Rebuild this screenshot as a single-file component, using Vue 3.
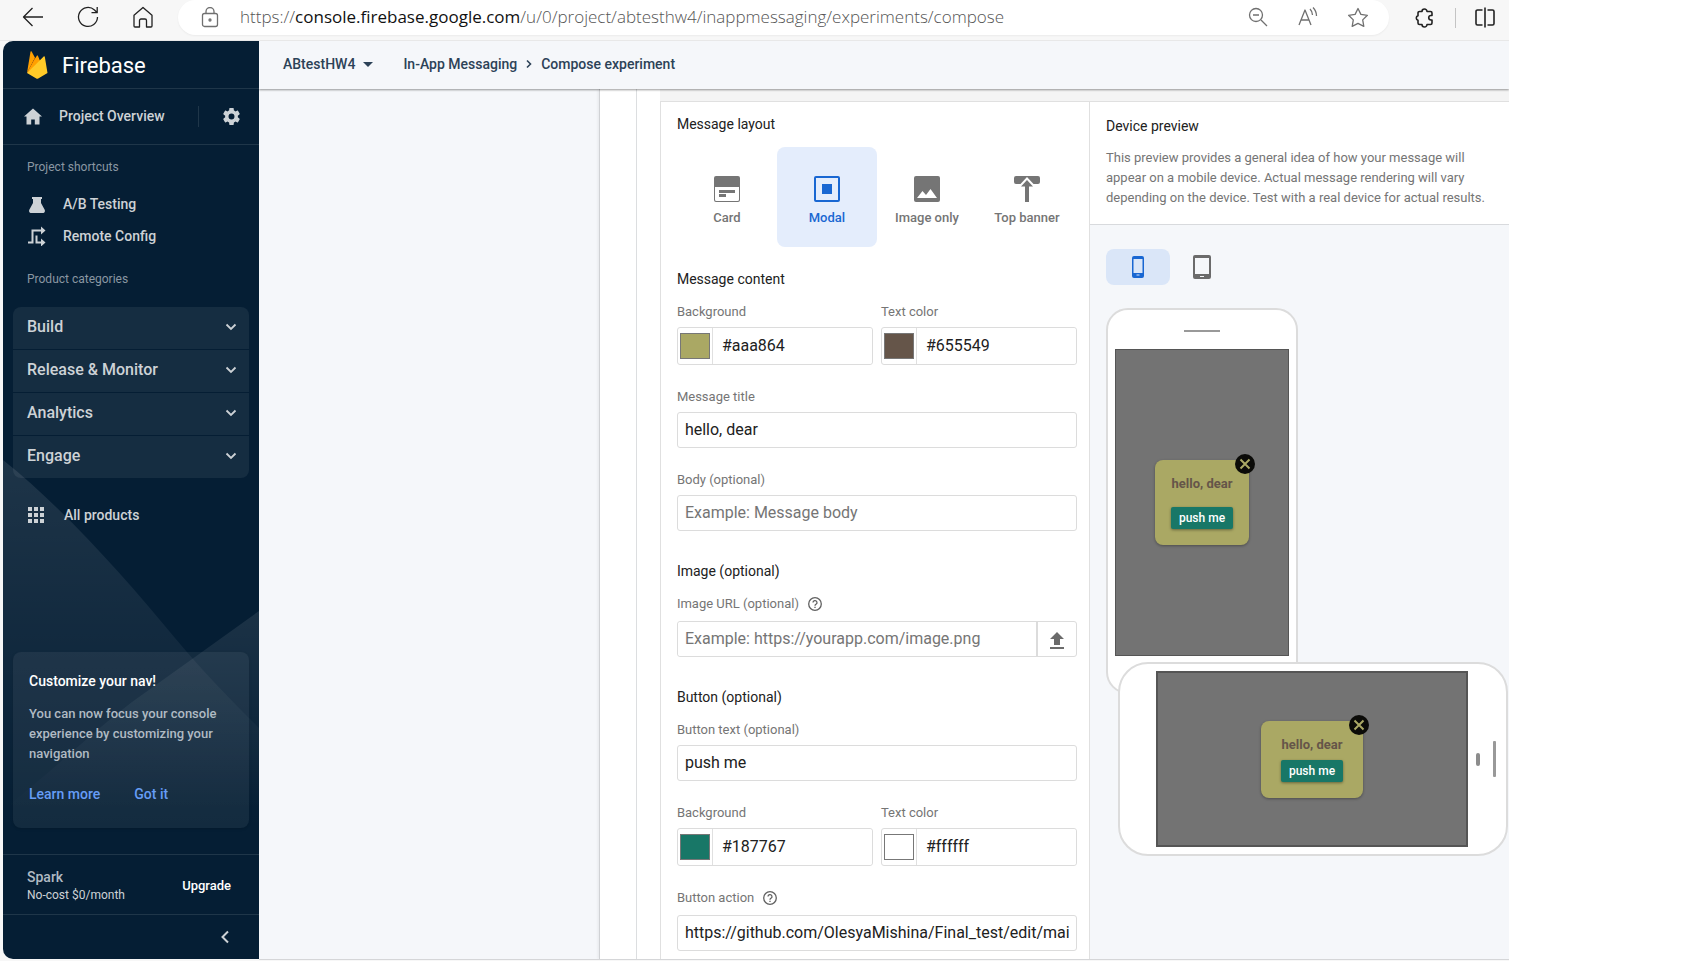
<script setup>
import { reactive, ref } from 'vue'

const layouts = [
  { id: 'card', label: 'Card' },
  { id: 'modal', label: 'Modal' },
  { id: 'image', label: 'Image only' },
  { id: 'banner', label: 'Top banner' },
]
const layout = ref('modal')
const device = ref('phone')
const categories = ['Build', 'Release & Monitor', 'Analytics', 'Engage']

const message = reactive({
  background: '#aaa864',
  color: '#655549',
  title: 'hello, dear',
  body: '',
  image: '',
  buttonText: 'push me',
  buttonBackground: '#187767',
  buttonColor: '#ffffff',
  action: 'https://github.com/OlesyaMishina/Final_test/edit/main/README.md',
})
</script>

<template>
  <div class="window">
    <header class="browser">
      <nav class="browser-nav" aria-label="Browser">
        <button type="button" aria-label="Back">
          <svg width="22" height="22" viewBox="0 0 22 22"><path d="M21 11H2M10.500 2 1.500 11l9 9" /></svg>
        </button>
        <button type="button" aria-label="Refresh">
          <svg width="22" height="22" viewBox="0 0 22 22"><path d="M20.500 11a9.500 9.500 0 1 1-3-7l2.500 2.500M20.200 1v5.700h-5.700" /></svg>
        </button>
        <button type="button" aria-label="Home">
          <svg width="22" height="22" viewBox="0 0 22 22"><path d="M2 9.200 11 1.500l9 7.700V20a1 1 0 0 1-1 1h-4.500v-6.500a1.500 1.500 0 0 0-1.500-1.500h-4a1.500 1.500 0 0 0-1.500 1.500V21H3a1 1 0 0 1-1-1z" /></svg>
        </button>
      </nav>
      <div class="address">
        <svg width="18" height="22" viewBox="0 0 18 22"><rect x="1.500" y="6.500" width="15" height="13" rx="2" /><path d="M5 6.500v-2a4 4 0 0 1 8 0v2" /><circle cx="9" cy="13" r="1" /></svg>
        <span class="url">https://<b>console.firebase.google.com</b>/u/0/project/abtesthw4/inappmessaging/experiments/compose</span>
        <div class="address-tools">
          <button type="button" aria-label="Zoom out">
            <svg width="22" height="22" viewBox="0 0 22 22"><circle cx="9" cy="8" r="6.500" /><path d="m14 13 6 6M6 8h6" /></svg>
          </button>
          <button type="button" aria-label="Read aloud">
            <svg width="22" height="22" viewBox="0 0 22 22"><path d="m2 18 6-15 6 15M4 13h8M13 2c1.500 1.500 2.500 3.500 2.500 6M16 .5c2 2 3.500 5 3.500 8.500" /></svg>
          </button>
          <button type="button" aria-label="Add to favourites">
            <svg width="22" height="22" viewBox="0 0 22 22"><path d="m11 1.500 2.900 5.900 6.500.9-4.700 4.600 1.100 6.500-5.800-3-5.800 3 1.100-6.500L1.600 8.300l6.500-.9z" /></svg>
          </button>
        </div>
      </div>
      <div class="browser-tools">
        <button type="button" aria-label="Extensions">
          <svg class="bold" width="22" height="22" viewBox="0 0 22 22"><path d="M5.500 4.500H8a2.500 2.500 0 0 1 5 0h3.500A1.500 1.500 0 0 1 18 6v2.500h-1a2.200 2.200 0 0 0 0 4.500h1v3a1.500 1.500 0 0 1-1.500 1.500H13a2.500 2.500 0 0 1-5 0H5.500A1.500 1.500 0 0 1 4 16v-2.700a2.400 2.400 0 0 1 0-4.600V6a1.500 1.500 0 0 1 1.500-1.500z" /></svg>
        </button>
        <i class="tool-divider"></i>
        <button type="button" aria-label="Split screen">
          <svg class="bold" width="22" height="22" viewBox="0 0 22 22"><path d="M8.500 3h-5A1.500 1.500 0 0 0 2 4.500v12A1.500 1.500 0 0 0 3.500 18h5M13.500 3h5A1.500 1.500 0 0 1 20 4.500v12a1.500 1.500 0 0 1-1.500 1.500h-5M11 .5v20" /></svg>
        </button>
      </div>
    </header>

    <div class="app">
      <aside class="sidebar">
        <svg class="decor" viewBox="0 0 256 400" preserveAspectRatio="none" aria-hidden="true">
          <defs>
            <linearGradient id="fade" x1="0" y1="0" x2="0" y2="1">
              <stop offset="0" stop-color="#fff" stop-opacity=".1" />
              <stop offset="1" stop-color="#fff" stop-opacity="0" />
            </linearGradient>
            <linearGradient id="fade2" x1="0" y1="0" x2="0" y2="1">
              <stop offset="0" stop-color="#fff" stop-opacity=".09" />
              <stop offset="1" stop-color="#fff" stop-opacity="0" />
            </linearGradient>
          </defs>
          <path fill="url(#fade)" d="M0 0C60 48 120 115 172 178c30 36 54 60 84 90v102H0z" />
          <path fill="url(#fade2)" d="M256 151 192 197 129 242C90 272 50 310 0 350h256z" />
        </svg>
        <a class="brand" href="#">
          <svg width="22" height="28" viewBox="0 0 22 28">
            <path fill="#ffa000" d="M1 22 4.500.8c.1-.6.800-.7 1.100-.2L9 6.800z" />
            <path fill="#f57c00" d="m12.500 12.500-3.200-6L1 22z" />
            <path fill="#ffa000" d="m1 22 9.800-17.200c.3-.5.900-.5 1.100 0l2.600 6.200z" />
            <path fill="#ffca28" d="M1 22 17.700 5.400c.4-.4 1-.2 1.100.3L21.500 22l-9.300 5.400c-.6.300-1.300.3-1.900 0z" />
          </svg>
          <span>Firebase</span>
        </a>
        <div class="overview">
          <a href="#">
            <svg width="20" height="20" viewBox="0 0 20 20"><path fill="currentColor" d="M10 2.500 1 10.500h2.500v8h4.700v-5h3.600v5h4.700v-8H19z" /></svg>
            Project Overview
          </a>
          <button type="button" aria-label="Project settings">
            <svg width="17" height="17" viewBox="2 2 20 20"><path fill="currentColor" d="M19.430 12.980c.04-.32.07-.64.07-.98s-.03-.66-.07-.98l2.110-1.650c.19-.15.24-.42.12-.64l-2-3.460c-.12-.22-.39-.3-.61-.22l-2.490 1c-.52-.4-1.080-.73-1.690-.98l-.38-2.650C14.460 2.180 14.250 2 14 2h-4c-.25 0-.46.18-.49.42l-.38 2.650c-.61.25-1.170.59-1.690.98l-2.490-1c-.23-.09-.49 0-.61.22l-2 3.460c-.13.22-.07.49.12.64l2.110 1.650c-.04.32-.07.65-.07.98s.03.66.07.98l-2.110 1.650c-.19.15-.24.42-.12.64l2 3.460c.12.22.39.3.61.22l2.490-1c.52.4 1.080.73 1.690.98l.38 2.650c.03.24.24.42.49.42h4c.25 0 .46-.18.49-.42l.38-2.650c.61-.25 1.170-.59 1.690-.98l2.490 1c.23.09.49 0 .61-.22l2-3.460c.12-.22.07-.49-.12-.64zM12 15.500a3.500 3.500 0 1 1 0-7 3.500 3.500 0 0 1 0 7z" /></svg>
          </button>
        </div>
        <h2 class="nav-label">Project shortcuts</h2>
        <nav class="shortcuts" aria-label="Project shortcuts">
          <a href="#">
            <svg width="20" height="20" viewBox="0 0 20 20"><path fill="currentColor" d="M5 3h10v2h-1v4l3.700 6.800c.6 1.100.1 3.200-1.200 3.200h-13c-1.300 0-1.800-2.100-1.200-3.200L6 9V5H5z" /></svg>
            A/B Testing
          </a>
          <a href="#">
            <svg width="20" height="20" viewBox="0 0 20 20"><path fill="none" stroke="currentColor" stroke-width="2" d="M1 16.500h4.500v-12H15M9.500 9.500v7H15" /><path fill="currentColor" d="m14 .5 4.500 4-4.500 4zM14 12.500l4.500 4-4.500 4z" /></svg>
            Remote Config
          </a>
        </nav>
        <h2 class="nav-label">Product categories</h2>
        <div class="categories">
          <button v-for="name in categories" :key="name" type="button">
            <span>{{ name }}</span>
            <svg width="12" height="8" viewBox="0 0 12 8"><path fill="none" stroke="currentColor" stroke-width="1.800" d="m1.500 1.500 4.500 4.500 4.500-4.500" /></svg>
          </button>
        </div>
        <a class="all-products" href="#">
          <svg width="18" height="18" viewBox="0 0 18 18"><path fill="currentColor" d="M0 1h4v4H0zm6 0h4v4H6zm6 0h4v4h-4zM0 7h4v4H0zm6 0h4v4H6zm6 0h4v4h-4zM0 13h4v4H0zm6 0h4v4H6zm6 0h4v4h-4z" /></svg>
          All products
        </a>
        <section class="promo">
          <h3>Customize your nav!</h3>
          <p>You can now focus your console experience by customizing your navigation</p>
          <div class="promo-actions">
            <a href="#">Learn more</a>
            <button type="button">Got it</button>
          </div>
        </section>
        <div class="plan">
          <div>
            <strong>Spark</strong>
            <small>No-cost $0/month</small>
          </div>
          <button type="button">Upgrade</button>
        </div>
        <div class="collapse">
          <button type="button" aria-label="Collapse navigation">
            <svg width="8" height="14" viewBox="0 0 8 14"><path fill="none" stroke="currentColor" stroke-width="2" d="M7 1.500 1.500 7 7 12.500" /></svg>
          </button>
        </div>
      </aside>

      <main class="main">
        <div class="topbar">
          <button type="button">ABtestHW4
            <svg width="10" height="5" viewBox="0 0 10 5"><path fill="currentColor" d="M0 0h10L5 5z" /></svg>
          </button>
          <a href="#">In-App Messaging</a>
          <svg class="crumb" width="6" height="10" viewBox="0 0 6 10"><path fill="none" stroke="currentColor" stroke-width="1.600" d="M1 1.500 4.500 5 1 8.500" /></svg>
          <a href="#">Compose experiment</a>
        </div>

        <div class="content">
          <div class="wizard">
            <div class="panel">
              <form class="form" @submit.prevent>
                <h2>Message layout</h2>
                <div class="tiles">
                  <button
                    v-for="item in layouts"
                    :key="item.id"
                    type="button"
                    :class="{ active: layout === item.id }"
                    :aria-pressed="layout === item.id"
                    @click="layout = item.id"
                  >
                    <svg width="26" height="26" viewBox="0 0 26 26">
                      <path v-if="item.id === 'card'" fill="currentColor" fill-rule="evenodd" d="M2 0h22a2 2 0 0 1 2 2v22a2 2 0 0 1-2 2H2a2 2 0 0 1-2-2V2a2 2 0 0 1 2-2zM1 11v12.500a1.500 1.500 0 0 0 1.500 1.500h21a1.500 1.500 0 0 0 1.500-1.500V11zm4 3h16v3H5zm0 4h7v3H5z" />
                      <path v-else-if="item.id === 'modal'" fill="currentColor" fill-rule="evenodd" d="M2 0h22a2 2 0 0 1 2 2v22a2 2 0 0 1-2 2H2a2 2 0 0 1-2-2V2a2 2 0 0 1 2-2zm0 2v22h22V2zm6 6h10v10H8z" />
                      <path v-else-if="item.id === 'image'" fill="currentColor" fill-rule="evenodd" d="M2 0h22a2 2 0 0 1 2 2v22a2 2 0 0 1-2 2H2a2 2 0 0 1-2-2V2a2 2 0 0 1 2-2zm1 22h20l-6.500-9-4.500 6-3.500-4z" />
                      <path v-else fill="currentColor" d="M2 0h22a2 2 0 0 1 2 2v4a2 2 0 0 1-2 2h-4.500L13 1 6.500 8H2a2 2 0 0 1-2-2V2a2 2 0 0 1 2-2zm11 4 6 6.500h-4V26h-4V10.500H7z" />
                    </svg>
                    {{ item.label }}
                  </button>
                </div>

                <h2 class="first">Message content</h2>
                <div class="pair">
                  <div class="field">
                    <label for="bg">Background</label>
                    <div class="color">
                      <input v-model="message.background" type="color" aria-label="Background swatch">
                      <input id="bg" v-model="message.background" type="text">
                    </div>
                  </div>
                  <div class="field">
                    <label for="fg">Text color</label>
                    <div class="color">
                      <input v-model="message.color" type="color" aria-label="Text color swatch">
                      <input id="fg" v-model="message.color" type="text">
                    </div>
                  </div>
                </div>
                <div class="field">
                  <label for="title">Message title</label>
                  <input id="title" v-model="message.title" type="text">
                </div>
                <div class="field">
                  <label for="body">Body (optional)</label>
                  <input id="body" v-model="message.body" type="text" placeholder="Example: Message body">
                </div>

                <h2>Image (optional)</h2>
                <div class="field helped">
                  <label for="image">Image URL (optional)
                    <svg width="14" height="14" viewBox="0 0 14 14"><circle cx="7" cy="7" r="6.300" /><path d="M5 5.600a2 2 0 1 1 3 1.700c-.7.400-1 .7-1 1.400M7 9.800v1.200" /></svg>
                  </label>
                  <div class="upload">
                    <input id="image" v-model="message.image" type="text" placeholder="Example: https://yourapp.com/image.png">
                    <button type="button" aria-label="Upload image">
                      <svg width="14" height="17" viewBox="0 0 14 17"><path fill="currentColor" d="M4 13V7H0l7-7 7 7h-4v6zM0 15h14v2H0z" /></svg>
                    </button>
                  </div>
                </div>

                <h2>Button (optional)</h2>
                <div class="field">
                  <label for="button-text">Button text (optional)</label>
                  <input id="button-text" v-model="message.buttonText" type="text">
                </div>
                <div class="pair">
                  <div class="field">
                    <label for="button-bg">Background</label>
                    <div class="color">
                      <input v-model="message.buttonBackground" type="color" aria-label="Button background swatch">
                      <input id="button-bg" v-model="message.buttonBackground" type="text">
                    </div>
                  </div>
                  <div class="field">
                    <label for="button-fg">Text color</label>
                    <div class="color">
                      <input v-model="message.buttonColor" type="color" aria-label="Button text color swatch">
                      <input id="button-fg" v-model="message.buttonColor" type="text">
                    </div>
                  </div>
                </div>
                <div class="field helped">
                  <label for="action">Button action
                    <svg width="14" height="14" viewBox="0 0 14 14"><circle cx="7" cy="7" r="6.300" /><path d="M5 5.600a2 2 0 1 1 3 1.700c-.7.400-1 .7-1 1.400M7 9.800v1.200" /></svg>
                  </label>
                  <input id="action" v-model="message.action" type="text">
                </div>
              </form>

              <section class="preview">
                <div class="preview-head">
                  <h2>Device preview</h2>
                  <p>This preview provides a general idea of how your message will appear on a mobile device. Actual message rendering will vary depending on the device. Test with a real device for actual results.</p>
                </div>
                <div class="stage">
                  <div class="toggle">
                    <button type="button" aria-label="Phone" :class="{ active: device === 'phone' }" @click="device = 'phone'">
                      <svg width="18" height="24" viewBox="0 0 18 24"><path fill="currentColor" fill-rule="evenodd" d="M5 1h8a2 2 0 0 1 2 2v18a2 2 0 0 1-2 2H5a2 2 0 0 1-2-2V3a2 2 0 0 1 2-2zm-.500 3v14h9V4zm3 15.500v1h3v-1z" /></svg>
                    </button>
                    <button type="button" aria-label="Tablet" :class="{ active: device === 'tablet' }" @click="device = 'tablet'">
                      <svg width="18" height="24" viewBox="0 0 18 24"><path fill="currentColor" fill-rule="evenodd" d="M2 0h14a2 2 0 0 1 2 2v20a2 2 0 0 1-2 2H2a2 2 0 0 1-2-2V2a2 2 0 0 1 2-2zm0 3v16h14V3zm5 18v1h4v-1z" /></svg>
                    </button>
                  </div>
                  <div class="phone">
                    <i class="speaker"></i>
                    <div class="screen">
                      <div class="modal" :style="{ background: message.background, color: message.color }">
                        <button class="close" type="button" aria-label="Close portrait message"><svg width="20" height="20" viewBox="0 0 20 20"><circle cx="10" cy="10" r="10" fill="#0b0b08" /><path :stroke="message.background" stroke-width="2" d="m5.500 5.500 9 9m0-9-9 9" /></svg></button>
                        <strong>{{ message.title }}</strong>
                        <button class="cta" type="button" :style="{ background: message.buttonBackground, color: message.buttonColor }">{{ message.buttonText }}</button>
                      </div>
                    </div>
                  </div>
                  <div class="phone landscape">
                    <div class="screen">
                      <div class="modal" :style="{ background: message.background, color: message.color }">
                        <button class="close" type="button" aria-label="Close landscape message"><svg width="20" height="20" viewBox="0 0 20 20"><circle cx="10" cy="10" r="10" fill="#0b0b08" /><path :stroke="message.background" stroke-width="2" d="m5.500 5.500 9 9m0-9-9 9" /></svg></button>
                        <strong>{{ message.title }}</strong>
                        <button class="cta" type="button" :style="{ background: message.buttonBackground, color: message.buttonColor }">{{ message.buttonText }}</button>
                      </div>
                    </div>
                    <i class="sensor"></i>
                    <i class="speaker"></i>
                  </div>
                </div>
              </section>
            </div>
          </div>
        </div>
      </main>
    </div>
  </div>
</template>

<style>
body {
  background: #fff;
}
</style>

<style scoped>
* {
  box-sizing: border-box;
}
button,
input {
  font: inherit;
  color: inherit;
}
button {
  padding: 0;
  border: 0;
  background: none;
}
a {
  color: inherit;
  text-decoration: none;
}
h2,
h3,
p {
  margin: 0;
}
svg {
  display: block;
  flex: none;
}
.window {
  display: flex;
  flex-direction: column;
  min-height: 100vh;
  margin-right: 180px;
  background: #f7f7f7;
  font: 14px/20px Roboto, sans-serif;
  color: #212121;
}

/* Browser bar */
.browser {
  display: flex;
  height: 41px;
  padding-bottom: 5px;
  border-bottom: 1px solid #e8e8e8;
}
.browser svg {
  fill: none;
  stroke: currentColor;
  stroke-width: 1.3;
  stroke-linejoin: round;
}
.browser svg.bold {
  stroke-width: 1.6;
}
.browser-nav {
  display: flex;
  gap: 33px;
  width: 178px;
  padding: 0 0 2px 22px;
  color: #222;
  align-items: center;
}
.address {
  display: flex;
  flex: 1;
  align-items: center;
  min-width: 0;
  padding: 0 20px 0 23px;
  border-radius: 18px;
  background: #fff;
  box-shadow: 0 1px 2px #0000000d;
  color: #707070;
}
.url {
  flex: 1;
  min-width: 0;
  padding: 0 0 2px 21px;
  overflow: hidden;
  white-space: nowrap;
  font: 300 17px/30px "Open Sans", "Noto Sans", sans-serif;
  color: #555;
}
.url b {
  font-weight: 400;
  color: #111;
}
.address-tools {
  display: flex;
  gap: 28px;
}
.browser-tools {
  display: flex;
  align-items: center;
  justify-content: space-between;
  width: 120px;
  padding: 0 13px 0 25px;
  color: #222;
}
.tool-divider {
  width: 1px;
  height: 20px;
  background: #c4c4c4;
}

/* Sidebar */
.app {
  display: flex;
  flex: 1;
  padding-left: 3px;
}
.sidebar {
  position: relative;
  display: flex;
  flex-direction: column;
  width: 256px;
  flex: none;
  margin-bottom: 2px;
  border-radius: 10px 0 0 10px;
  background: #051e34;
  color: #cdd2d6;
  font-weight: 500;
  overflow: hidden;
}
.decor {
  position: absolute;
  left: 0;
  bottom: 99px;
  width: 100%;
  height: 400px;
}
.sidebar > :not(.decor) {
  position: relative;
}
.brand {
  display: flex;
  align-items: center;
  gap: 14px;
  height: 48px;
  padding-left: 23px;
  border-bottom: 1px solid #1f3649;
  color: #fff;
  font-size: 22px;
  font-weight: 400;
}
.brand span {
  padding-top: 2px;
}
.overview {
  display: flex;
  align-items: center;
  justify-content: space-between;
  height: 56px;
  padding: 0 19px 0 20px;
  border-bottom: 1px solid #1f3649;
}
.overview a {
  display: flex;
  gap: 16px;
  flex: 1;
  padding-bottom: 2px;
}
.overview button {
  padding: 2px 0 2px 24px;
  border-left: 1px solid #1f3649;
}
.nav-label {
  padding: 12px 24px 11px;
  font-size: 12px;
  font-weight: 400;
  line-height: 20px;
  color: #8a97a2;
}
.shortcuts {
  margin-bottom: 5px;
}
.shortcuts a {
  display: flex;
  align-items: center;
  gap: 16px;
  height: 32px;
  padding-left: 24px;
}
.categories {
  display: grid;
  gap: 1px;
  margin: 7px 10px 0;
  border-radius: 8px;
  overflow: hidden;
}
.categories button {
  display: flex;
  align-items: center;
  justify-content: space-between;
  height: 42px;
  padding: 0 12px 2px 14px;
  background: #ffffff11;
  font-size: 16px;
}
.all-products {
  display: flex;
  align-items: center;
  gap: 18px;
  height: 40px;
  margin-top: 17px;
  padding-left: 25px;
}
.promo {
  margin: auto 10px 26px;
  padding: 19px 16px 24px;
  border-radius: 8px;
  background: #ffffff0f;
  box-shadow: 0 1px 3px #0002;
}
.promo h3 {
  color: #fff;
  font-size: 14px;
  font-weight: 500;
}
.promo p {
  margin: 13px 0 20px;
  font-size: 13px;
  color: #b0bac3;
}
.promo-actions {
  display: flex;
  gap: 34px;
  line-height: 20px;
  color: #669df6;
}
.plan {
  display: flex;
  align-items: center;
  justify-content: space-between;
  height: 61px;
  padding: 2px 28px 0 24px;
  border-top: 1px solid #1f3649;
  border-bottom: 1px solid #1f3649;
}
.plan strong,
.plan small {
  display: block;
  line-height: 18px;
}
.plan strong {
  font-weight: 500;
  color: #b0bac3;
}
.plan small {
  font-size: 12px;
  font-weight: 400;
}
.plan button {
  color: #fff;
  font-size: 13px;
}
.collapse {
  display: flex;
  justify-content: flex-end;
  height: 44px;
  padding-right: 30px;
}

/* Main area */
.main {
  display: flex;
  flex-direction: column;
  flex: 1;
  min-width: 0;
  margin-bottom: 1px;
  border-bottom: 1px solid #d5d6d8;
  background: #f5f7fa;
  overflow: hidden;
}
.topbar {
  position: relative;
  z-index: 1;
  display: flex;
  align-items: center;
  height: 48px;
  padding: 0 24px 2px;
  background: #f5f7fa;
  box-shadow: 0 1px 2px #0006;
  color: #2c4257;
  font-weight: 500;
}
.topbar button {
  display: flex;
  align-items: center;
  gap: 8px;
  margin-right: 30px;
}
.crumb {
  margin: 0 9px;
}
.content {
  display: grid;
  grid-template-columns: 3fr 8fr;
  flex: 1;
}
.wizard {
  display: grid;
  grid-column: 2;
  grid-template-columns: minmax(0, 1fr);
  margin-left: -1px;
  padding-left: 36px;
  border-left: 1px solid #d0d2d5;
  box-shadow: -1px 0 3px #0001;
  background: #fff;
}
.panel {
  display: grid;
  grid-template-columns: minmax(0, 1fr) 420px;
  padding-left: 23px;
  border-left: 1px solid #dcdee0;
}
.form {
  padding: 12px 12px 7px 16px;
}
.form,
.preview {
  border-left: 1px solid #e0e0e0;
  border-top: 1px solid #e0e0e0;
  margin-top: 12px;
  position: relative;
}
.form::before,
.preview::before {
  content: "";
  position: absolute;
  left: -1px;
  right: 0;
  top: -13px;
  height: 12px;
  background: #f4f4f4;
}
.form h2,
.preview h2 {
  font-size: 14px;
  font-weight: 400;
  line-height: 20px;
}
.form h2 {
  margin: 30px 0 13px;
}
.form h2:first-child {
  margin-top: 0;
}
.form h2.first {
  margin-top: 22px;
}
.tiles {
  display: grid;
  grid-template-columns: repeat(4, 1fr);
}
.tiles button {
  display: flex;
  flex-direction: column;
  align-items: center;
  gap: 6px;
  height: 100px;
  padding-top: 29px;
  border-radius: 8px;
  color: #757575;
  font-size: 13px;
  font-weight: 500;
}
.tiles .active {
  background: #e4edfc;
  color: #1967d2;
}
.pair {
  display: grid;
  grid-template-columns: 1fr 1fr;
  gap: 8px;
}
.pair + .field,
.field + .field,
.field + .pair {
  margin-top: 22px;
}
.pair .field {
  margin-top: 0;
}
.field label {
  display: flex;
  align-items: center;
  gap: 9px;
  margin-bottom: 5px;
  font-size: 13px;
  color: #757575;
}
.helped label {
  padding-bottom: 2px;
  height: 22px;
}
.field label svg {
  fill: none;
  stroke: #616161;
  stroke-width: 1.3;
}
.field input[type="text"] {
  display: block;
  width: 100%;
  min-width: 0;
  height: 36px;
  padding: 0 7px 2px;
  border: 1px solid #dcdcdc;
  border-radius: 3px;
  background: #fff;
  font-size: 16px;
}
.field input::placeholder {
  color: #757575;
}
.color,
.upload {
  display: flex;
  border: 1px solid #dcdcdc;
  border-radius: 3px;
}
.field .color input[type="text"] {
  border: 0;
  padding: 0 9px 2px;
}
.color input[type="color"] {
  flex: none;
  width: 35px;
  height: 36px;
  padding: 5px 2px;
  border: 0;
  border-right: 1px solid #e0e0e0;
  background: none;
}
.color input::-webkit-color-swatch-wrapper {
  padding: 0;
}
.color input::-webkit-color-swatch {
  border: 1px solid #777;
  border-radius: 0;
}
.field .upload input[type="text"] {
  flex: 1;
  height: 34px;
  padding: 0 7px 2px;
  border: 0;
}
.upload button {
  display: grid;
  place-items: center;
  width: 40px;
  padding-top: 3px;
  border-left: 2px solid #dcdcdc;
  color: #6b6b6b;
}

/* Preview */
.preview {
  display: flex;
  flex-direction: column;
  min-width: 0;
}
.preview-head {
  padding: 14px 16px 16px;
  border-bottom: 1px solid #d8dadd;
}
.preview-head p {
  margin-top: 12px;
  font-size: 13px;
  color: #757575;
}
.stage {
  flex: 1;
  padding: 24px 0 24px 16px;
  background: #f5f7fa;
}
.toggle {
  display: flex;
}
.toggle button {
  display: grid;
  place-items: center;
  width: 64px;
  height: 36px;
  border-radius: 8px;
  color: #6b6b6b;
}
.toggle .active {
  background: #dae6f8;
  color: #1967d2;
}
.phone {
  display: flex;
  flex-direction: column;
  align-items: center;
  width: 192px;
  height: 386px;
  margin-top: 23px;
  border: 2px solid #dcdcdc;
  border-radius: 22px;
  background: #fff;
}
.phone .speaker {
  width: 36px;
  height: 2px;
  margin: 20px 0 17px;
  background: #999;
}
.screen {
  display: flex;
  align-items: center;
  justify-content: center;
  width: 174px;
  height: 307px;
  border: 1px solid #555;
  background: #737373;
}
.modal {
  position: relative;
  display: flex;
  flex-direction: column;
  align-items: center;
  width: 94px;
  padding: 14px 0 16px;
  border-radius: 8px;
  box-shadow: 0 1px 3px #0005;
}
.modal strong {
  margin-bottom: 13px;
  font-size: 13px;
  font-weight: 700;
}
.cta {
  height: 22px;
  padding: 0 8px;
  border-radius: 2px;
  box-shadow: 0 1px 3px #0006;
  font-size: 12px;
  font-weight: 500;
}
.close {
  position: absolute;
  top: -6px;
  right: -6px;
}
.landscape {
  position: relative;
  flex-direction: row;
  width: auto;
  max-width: 390px;
  height: 194px;
  margin: -32px 0 0 12px;
  padding-left: 36px;
  border-radius: 30px;
}
.landscape .screen {
  width: 312px;
  height: 176px;
  border-width: 2px;
}
.landscape .modal {
  width: 102px;
  padding: 14px 0 16px;
}
.landscape .modal strong {
  margin-bottom: 5px;
}
.sensor {
  width: 4px;
  height: 13px;
  margin: 0 13px 0 8px;
  border-radius: 2px;
  background: #8c8c8c;
}
.landscape .speaker {
  width: 3px;
  height: 36px;
  margin: 0;
  border-radius: 1px;
}
</style>
